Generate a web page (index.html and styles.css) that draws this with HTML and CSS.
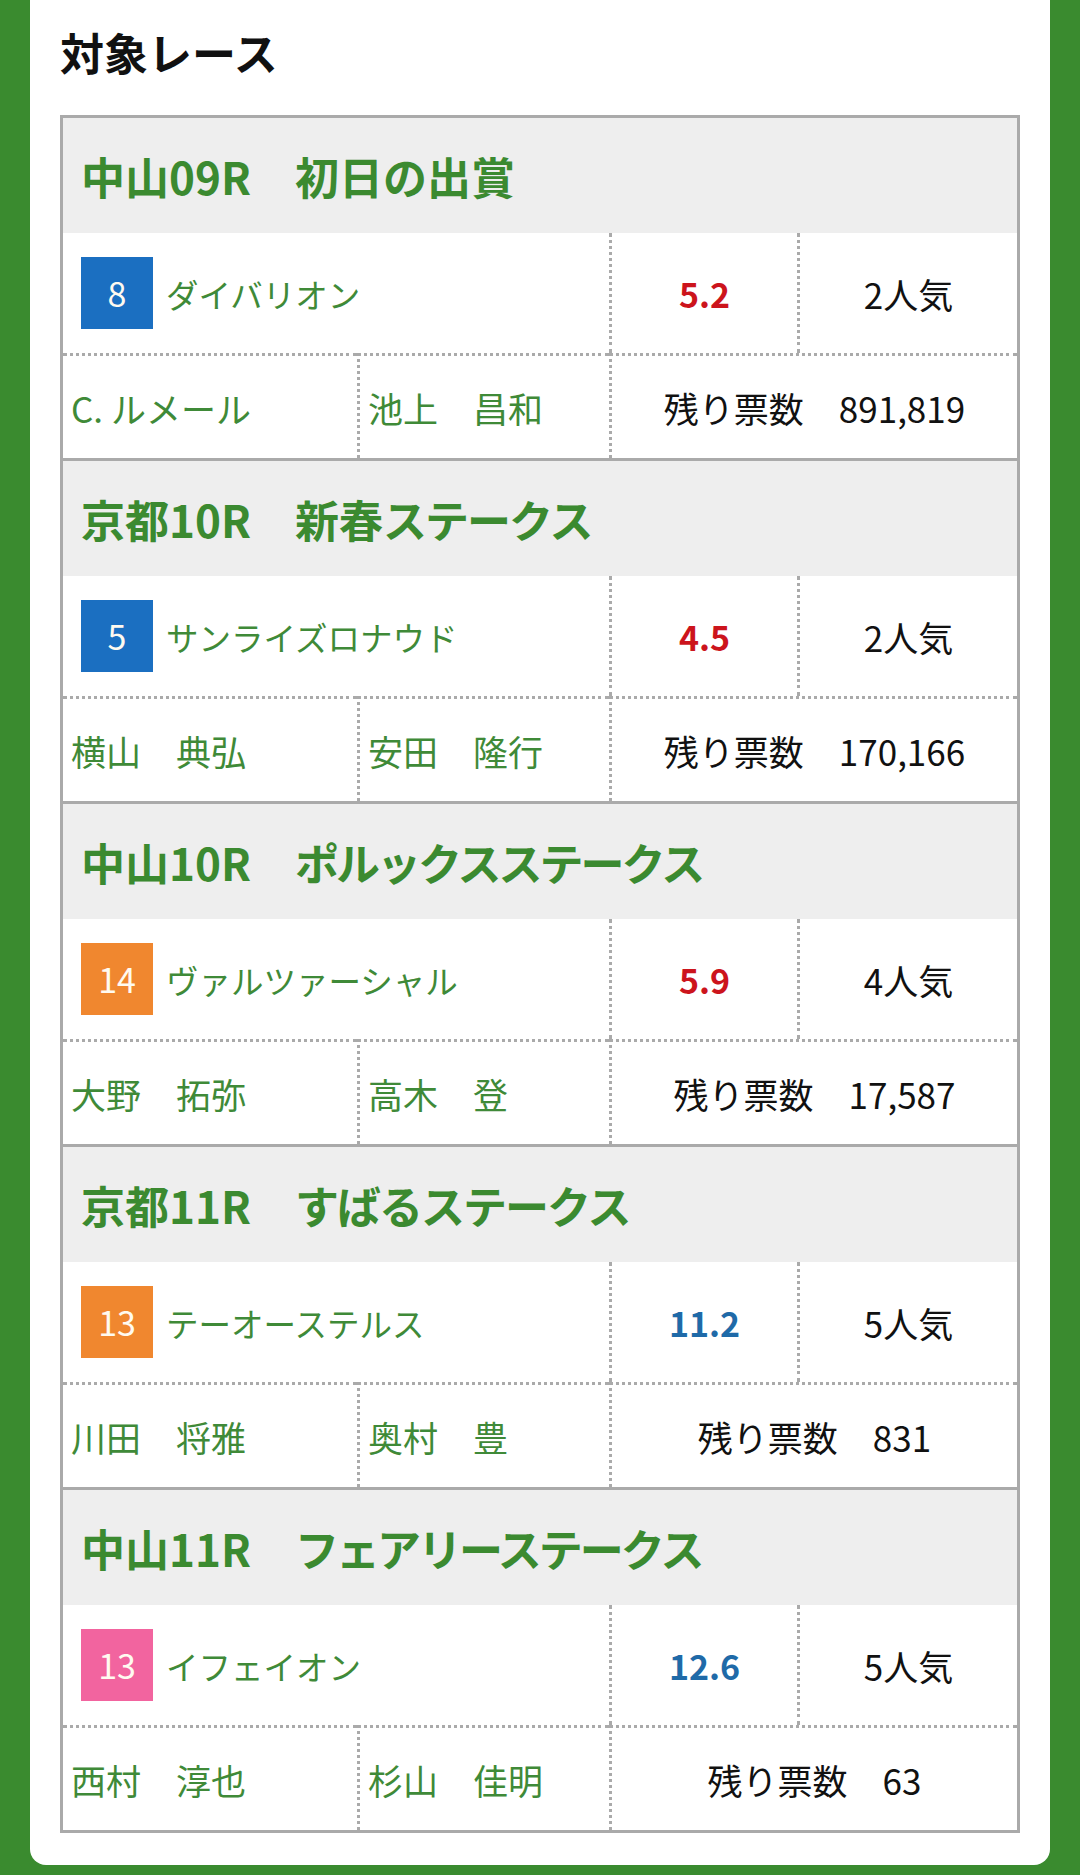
FILE: index.html
```html
<!DOCTYPE html>
<html lang="ja">
<head>
<meta charset="utf-8">
<title>対象レース</title>
<link rel="stylesheet" href="styles.css">
</head>
<body>
<div class="card">
  <h2 class="title">対象レース</h2>
  <div class="races">
    <section class="race">
      <div class="race-head">中山09R　初日の出賞</div>
      <div class="horse"><span class="badge blue">8</span><span class="name">ダイバリオン</span></div>
      <div class="odds red">5.2</div>
      <div class="pop">2人気</div>
      <div class="jockey">C. ルメール</div>
      <div class="trainer">池上　昌和</div>
      <div class="votes">残り票数　891,819</div>
    </section>
    <section class="race">
      <div class="race-head">京都10R　新春<span class="kana">ステークス</span></div>
      <div class="horse"><span class="badge blue">5</span><span class="name">サンライズロナウド</span></div>
      <div class="odds red">4.5</div>
      <div class="pop">2人気</div>
      <div class="jockey">横山　典弘</div>
      <div class="trainer">安田　隆行</div>
      <div class="votes">残り票数　170,166</div>
    </section>
    <section class="race">
      <div class="race-head">中山10R　<span class="kana small">ポルックスステークス</span></div>
      <div class="horse"><span class="badge orange">14</span><span class="name">ヴァルツァーシャル</span></div>
      <div class="odds red">5.9</div>
      <div class="pop">4人気</div>
      <div class="jockey">大野　拓弥</div>
      <div class="trainer">高木　登</div>
      <div class="votes">残り票数　17,587</div>
    </section>
    <section class="race">
      <div class="race-head">京都11R　<span class="kana">すばるステークス</span></div>
      <div class="horse"><span class="badge orange">13</span><span class="name">テーオーステルス</span></div>
      <div class="odds blue-text">11.2</div>
      <div class="pop">5人気</div>
      <div class="jockey">川田　将雅</div>
      <div class="trainer">奥村　豊</div>
      <div class="votes">残り票数　831</div>
    </section>
    <section class="race">
      <div class="race-head">中山11R　<span class="kana small">フェアリーステークス</span></div>
      <div class="horse"><span class="badge pink">13</span><span class="name">イフェイオン</span></div>
      <div class="odds blue-text">12.6</div>
      <div class="pop">5人気</div>
      <div class="jockey">西村　淳也</div>
      <div class="trainer">杉山　佳明</div>
      <div class="votes">残り票数　63</div>
    </section>
  </div>
</div>
</body>
</html>
```

FILE: styles.css
```css
* {
  box-sizing: border-box;
}

html, body {
  margin: 0;
  padding: 0;
}

body {
  background: #3a8b2f;
  font-family: "Noto Sans CJK JP", "Noto Sans", sans-serif;
  min-height: 1875px;
}

.card {
  margin: 0 30px;
  background: #ffffff;
  border-radius: 0 0 16px 16px;
  padding: 26px 30px 32px;
}

.title {
  margin: 0 0 37px;
  font-size: 44px;
  line-height: 52px;
  font-weight: 700;
  color: #111111;
}

.races {
  border: 3px solid #aaaaaa;
}

.race {
  display: grid;
  grid-template-columns: 294px 252px 188px 220px;
}

.race + .race {
  border-top: 3px solid #aaaaaa;
}

.race-head {
  grid-column: 1 / -1;
  height: 115px;
  background: #eeeeee;
  display: flex;
  align-items: center;
  padding-left: 18px;
  font-size: 44px;
  font-weight: 700;
  color: #3b8a30;
  white-space: pre;
}

.kana {
  letter-spacing: -2px;
}

.kana.small {
  letter-spacing: -3px;
}

.horse {
  grid-column: 1 / 3;
  height: 120px;
  display: flex;
  align-items: center;
  padding-left: 18px;
  gap: 13px;
}

.badge {
  width: 72px;
  height: 72px;
  display: flex;
  align-items: center;
  justify-content: center;
  color: #fffaf0;
  font-size: 34px;
  line-height: 1;
}

.badge.blue { background: #1b6fc1; }
.badge.orange { background: #f0872f; }
.badge.pink { background: #f2649f; }

.name {
  font-size: 32.5px;
  color: #3f8a38;
}

.odds,
.pop {
  height: 120px;
  border-left: 3px dotted #aaaaaa;
  display: flex;
  align-items: center;
  justify-content: center;
  font-size: 35px;
}

.odds {
  font-weight: 700;
  font-size: 34px;
}

.odds.red { color: #cc141c; }
.odds.blue-text { color: #1f6aa8; }

.pop {
  color: #111111;
}

.jockey,
.trainer,
.votes {
  height: 105px;
  border-top: 3px dotted #aaaaaa;
  display: flex;
  align-items: center;
  font-size: 35px;
  color: #3f8a38;
  padding-left: 8px;
}

.trainer,
.votes {
  border-left: 3px dotted #aaaaaa;
}

.votes {
  grid-column: 3 / 5;
  justify-content: center;
  padding-left: 0;
  color: #111111;
}
```
